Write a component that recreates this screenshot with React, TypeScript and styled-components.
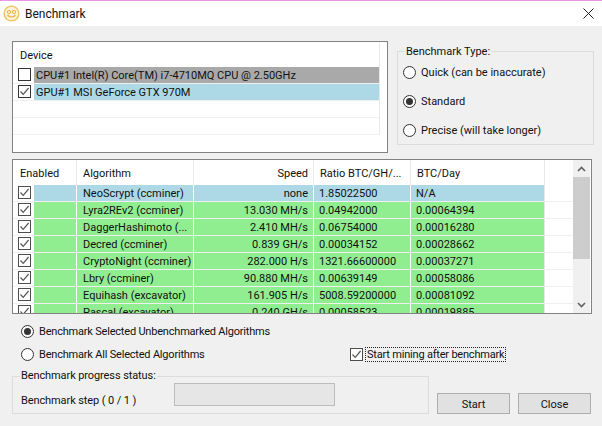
import React from "react";
import styled, { createGlobalStyle } from "styled-components";

const Global = createGlobalStyle`
  html, body { margin: 0; padding: 0; background: #f0f0f0; }
  body { font-family: Roboto, "Noto Sans", sans-serif; font-size: 11px; color: #111; }
`;

const Window = styled.div`
  width: 602px; height: 426px; display: flex; flex-direction: column;
  background: #f0f0f0; overflow: hidden; box-sizing: border-box;
`;
const TitleBar = styled.header`
  height: 26px; flex: none; box-sizing: border-box; border-top: 1px solid #ea96e6;
  background: #fff; display: flex; align-items: center; padding: 0 8px 1px 3px;
`;
const Title = styled.span`margin: 2px 0 0 5px; font-size: 12px; flex: 1;`;
const TopRow = styled.div`display: flex; align-items: flex-start; margin: 15px 0 0 12px;`;
const DeviceList = styled.div`
  width: 376px; height: 112px; box-sizing: border-box; border: 1px solid #828282;
  background: #fff; overflow: hidden; display: flex; flex-direction: column;
`;
const DeviceHeader = styled.div`
  height: 25px; flex: none; width: 367px; box-sizing: border-box; padding: 6px 0 0 7px;
  border-right: 1px solid #e8e8e8; line-height: 16px;
`;
const DeviceRow = styled.div`
  height: 17px; flex: none; width: 367px; box-sizing: border-box; display: flex;
  border-bottom: 1px solid #f0f0f0; border-right: 1px solid #e8e8e8;
`;
const DeviceCell = styled.div<{ $bg?: string }>`
  flex: 1; height: 16px; background: ${(p) => p.$bg || "transparent"};
  line-height: 18px; padding-left: 2px; white-space: nowrap; overflow: hidden;
`;
const CheckCell = styled.div`
  width: 21px; flex: none; box-sizing: border-box; padding: 1px 0 0 5px; background: #fff;
`;
const Box = styled.span<{ $strong?: boolean }>`
  display: block; width: 13px; height: 13px; box-sizing: border-box; background: #fff;
  border: 1px solid ${(p) => (p.$strong ? "#333" : "#4d4d4d")};
  svg { display: block; }
`;
const Check = ({ on = true, strong = false }: { on?: boolean; strong?: boolean }) => (
  <Box $strong={strong}>
    {on && (
      <svg width="11" height="11" viewBox="0 0 11 11">
        <path d="M1.5 5.5 L4.2 8.3 L9.6 2" fill="none" stroke="#555" strokeWidth="1.2" />
      </svg>
    )}
  </Box>
);
const TypeGroup = styled.fieldset`
  width: 197px; height: 103px; box-sizing: border-box; margin: 1px 0 0 9px;
  border: 1px solid #dcdcdc; padding: 0 0 0 5px;
`;
const Legend = styled.legend<{ $shift?: number; $drop?: number }>`
  padding: ${(p) => p.$drop ?? 0}px 1px 0; margin-left: ${(p) => p.$shift ?? 2}px; line-height: 16px; white-space: nowrap;
`;
const TypeList = styled.div`display: flex; flex-direction: column; gap: 13px; margin-top: 4px;`;
const RadioRow = styled.label<{ $width?: number }>`
  display: flex; align-items: center; height: 16px; line-height: 16px; white-space: nowrap;
  ${(p) => (p.$width ? `width: ${p.$width}px; flex: none;` : "")}
`;
const RadioText = styled.span`margin-top: 2px;`;
const RadioDot = styled.span<{ $on?: boolean }>`
  width: 13px; height: 13px; box-sizing: border-box; border-radius: 50%; border: 1px solid #333;
  background: #fff; margin-right: 5px; flex: none; display: flex; align-items: center; justify-content: center;
  &::after { content: ""; width: 7px; height: 7px; border-radius: 50%; background: ${(p) => (p.$on ? "#333" : "transparent")}; }
`;
const Table = styled.div`
  width: 580px; height: 155px; box-sizing: border-box; margin: 6px 0 0 12px; border: 1px solid #828282;
  background: #fff; display: flex; overflow: hidden; flex: none;
`;
const TableMain = styled.div`flex: 1; min-width: 0; overflow: hidden;`;
const cols = "21px 43px 117px 120px 97px 134px 28px";
const HeadRow = styled.div`display: grid; grid-template-columns: 64px 117px 120px 97px 134px 28px; height: 25px;`;
const HeadCell = styled.div<{ $right?: boolean; $pad?: number }>`
  box-sizing: border-box; line-height: 27px; height: 25px; padding: 0 5px 0 ${(p) => p.$pad ?? 6}px; border-right: 1px solid #e8e8e8;
  text-align: ${(p) => (p.$right ? "right" : "left")}; white-space: nowrap; overflow: hidden;
`;
const AlgoRow = styled.div`
  display: grid; grid-template-columns: ${cols}; height: 17px; box-sizing: border-box;
  border-bottom: 1px solid #f0f0f0;
`;
const Cell = styled.div<{ $bg: string; $right?: boolean; $pad?: number }>`
  height: 16px; line-height: 18px; background: ${(p) => p.$bg}; box-sizing: border-box;
  border-right: 1px solid #fff; padding: 0 5px 0 ${(p) => p.$pad ?? 6}px; white-space: nowrap; overflow: hidden;
  text-align: ${(p) => (p.$right ? "right" : "left")};
`;
const Blank = styled.div`border-left: 1px solid #e8e8e8; margin-left: -1px;`;
const Scrollbar = styled.div`
  width: 17px; flex: none; margin-right: 1px; background: #f0f0f0; display: flex; flex-direction: column;
`;
const ScrollBtn = styled.div`height: 17px; flex: none; display: flex; align-items: center; justify-content: center;`;
const Thumb = styled.div`height: 82px; background: #cdcdcd; flex: none;`;
const Track = styled.div`flex: 1;`;
const Options = styled.div`margin: 9px 0 0 21px; letter-spacing: -0.2px;`;
const SecondOption = styled.div`display: flex; align-items: center; margin-top: 7px; height: 16px;`;
const MineCheck = styled.div`display: flex; align-items: center;`;
const FocusLabel = styled.span`
  margin-left: 3px; outline: 1px dotted #222; height: 13px; line-height: 14px; padding: 0 1px; white-space: nowrap;
`;
const Bottom = styled.div`display: flex; align-items: flex-end; margin: 6px 0 0 12px;`;
const ProgressGroup = styled.fieldset`
  width: 417px; height: 46px; box-sizing: border-box; margin: 0; border: 1px solid #dcdcdc;
  padding: 0 0 0 8px; display: flex; letter-spacing: -0.1px;
`;
const ProgressInner = styled.div`display: flex; align-items: center; height: 100%;`;
const StepLabel = styled.span`width: 153px; flex: none; white-space: nowrap; margin-top: 4px;`;
const ProgressBar = styled.div`
  width: 161px; height: 23px; box-sizing: border-box; background: #e6e6e6; border: 1px solid #bcbcbc; margin-top: -8px;
`;
const Button = styled.button`
  width: 73px; height: 21px; box-sizing: border-box; background: #e1e1e1; border: 1px solid #adadad;
  font: inherit; color: #111; padding: 1px 0 0; margin-left: 8px; border-radius: 0;
`;
const Icon = () => (
  <svg width="17" height="17" viewBox="0 0 17 17">
    <circle cx="8.5" cy="8.5" r="7.4" fill="#fdf3d0" stroke="#f2c266" strokeWidth="1.4" />
    <circle cx="6" cy="7" r="1.6" fill="none" stroke="#e9b04e" />
    <circle cx="11" cy="7" r="1.6" fill="none" stroke="#e9b04e" />
    <path d="M4.5 10 Q8.5 14 12.5 10" fill="none" stroke="#e9b04e" strokeWidth="1.1" />
  </svg>
);
const Chevron = ({ up }: { up?: boolean }) => (
  <svg width="9" height="6" viewBox="0 0 9 6">
    <path d={up ? "M1 5 L4.5 1.5 L8 5" : "M1 1 L4.5 4.5 L8 1"} fill="none" stroke="#606060" strokeWidth="1.6" />
  </svg>
);

const BLUE = "#add8e6";
const GREEN = "#90ee90";
const rows = [
  ["NeoScrypt (ccminer)", "none", "1.85022500", "N/A", BLUE],
  ["Lyra2REv2 (ccminer)", "13.030 MH/s", "0.04942000", "0.00064394", GREEN],
  ["DaggerHashimoto (...", "2.410 MH/s", "0.06754000", "0.00016280", GREEN],
  ["Decred (ccminer)", "0.839 GH/s", "0.00034152", "0.00028662", GREEN],
  ["CryptoNight (ccminer)", "282.000 H/s", "1321.66600000", "0.00037271", GREEN],
  ["Lbry (ccminer)", "90.880 MH/s", "0.00639149", "0.00058086", GREEN],
  ["Equihash (excavator)", "161.905 H/s", "5008.59200000", "0.00081092", GREEN],
  ["Pascal (excavator)", "0.240 GH/s", "0.00058523", "0.00019885", GREEN],
];

export default function App() {
  return (
    <Window>
      <Global />
      <TitleBar>
        <Icon />
        <Title>Benchmark</Title>
        <svg width="11" height="11" viewBox="0 0 11 11">
          <path d="M0.5 0.5 L10.5 10.5 M10.5 0.5 L0.5 10.5" stroke="#222" strokeWidth="1" />
        </svg>
      </TitleBar>
      <TopRow>
        <DeviceList>
          <DeviceHeader>Device</DeviceHeader>
          <DeviceRow>
            <CheckCell><Check on={false} strong /></CheckCell>
            <DeviceCell $bg="#a9a9a9">CPU#1 Intel(R) Core(TM) i7-4710MQ CPU @ 2.50GHz</DeviceCell>
          </DeviceRow>
          <DeviceRow>
            <CheckCell><Check strong /></CheckCell>
            <DeviceCell $bg={BLUE}>GPU#1 MSI GeForce GTX 970M</DeviceCell>
          </DeviceRow>
          <DeviceRow />
          <DeviceRow />
        </DeviceList>
        <TypeGroup>
          <Legend $drop={2}>Benchmark Type:</Legend>
          <TypeList>
            <RadioRow><RadioDot /><RadioText>Quick (can be inaccurate)</RadioText></RadioRow>
            <RadioRow><RadioDot $on /><RadioText>Standard</RadioText></RadioRow>
            <RadioRow><RadioDot /><RadioText>Precise (will take longer)</RadioText></RadioRow>
          </TypeList>
        </TypeGroup>
      </TopRow>
      <Table>
        <TableMain>
          <HeadRow>
            <HeadCell $pad={7}>Enabled</HeadCell>
            <HeadCell>Algorithm</HeadCell>
            <HeadCell $right>Speed</HeadCell>
            <HeadCell>Ratio BTC/GH/...</HeadCell>
            <HeadCell>BTC/Day</HeadCell>
          </HeadRow>
          {rows.map((r) => (
            <AlgoRow key={r[0]}>
              <CheckCell><Check /></CheckCell>
              <Cell $bg={r[4]} />
              <Cell $bg={r[4]}>{r[0]}</Cell>
              <Cell $bg={r[4]} $right>{r[1]}</Cell>
              <Cell $bg={r[4]} $pad={5}>{r[2]}</Cell>
              <Cell $bg={r[4]} $pad={5}>{r[3]}</Cell>
              <Blank />
            </AlgoRow>
          ))}
        </TableMain>
        <Scrollbar>
          <ScrollBtn><Chevron up /></ScrollBtn>
          <Thumb />
          <Track />
          <ScrollBtn><Chevron /></ScrollBtn>
        </Scrollbar>
      </Table>
      <Options>
        <RadioRow><RadioDot $on /><RadioText>Benchmark Selected Unbenchmarked Algorithms</RadioText></RadioRow>
        <SecondOption>
          <RadioRow $width={329}><RadioDot /><RadioText>Benchmark All Selected Algorithms</RadioText></RadioRow>
          <MineCheck>
            <Check />
            <FocusLabel>Start mining after benchmark</FocusLabel>
          </MineCheck>
        </SecondOption>
      </Options>
      <Bottom>
        <ProgressGroup>
          <Legend $shift={-1}>Benchmark progress status:</Legend>
          <ProgressInner>
            <StepLabel>Benchmark step ( 0 / 1 )</StepLabel>
            <ProgressBar />
          </ProgressInner>
        </ProgressGroup>
        <Button>Start</Button>
        <Button>Close</Button>
      </Bottom>
    </Window>
  );
}
